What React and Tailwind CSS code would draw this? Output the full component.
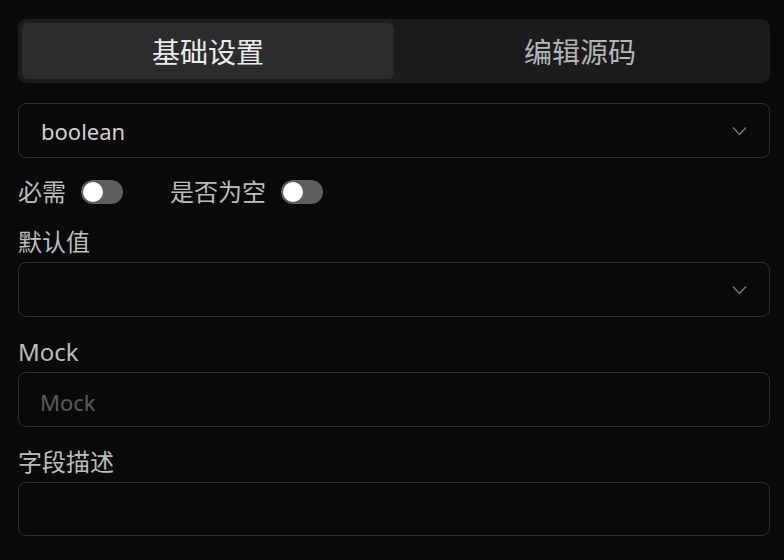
import { useState } from "react";

const font = { fontFamily: '"Noto Sans", "Noto Sans CJK SC", sans-serif' };

const Chevron = () => (
    <svg className="h-[10px] w-[15px] text-[#7a7a7a]" viewBox="0 0 15 10" fill="none">
        <path d="M1 1.5l6.5 7 6.5-7" stroke="currentColor" strokeWidth="1.4" />
    </svg>
);

const Toggle = ({ on, onClick }) => (
    <button
        type="button"
        onClick={onClick}
        className={`flex h-6 w-[42px] items-center rounded-full px-[2px] ${on ? "bg-[#3b82f6] justify-end" : "bg-[#5e5e5e] justify-start"}`}
    >
        <span className="h-5 w-5 rounded-full bg-white" />
    </button>
);

const Label = ({ children }) => (
    <div className="h-8 text-[24px] leading-8 text-[#bdbdbd]">{children}</div>
);

export default function App() {
    const [tab, setTab] = useState(0);
    const [required, setRequired] = useState(false);
    const [nullable, setNullable] = useState(false);

    return (
        <div className="min-h-[560px] w-full bg-[#0a0a0a] pl-[18px] pr-[14px] pt-[19px]" style={font}>
            {/* tabs */}
            <div className="flex h-16 rounded-lg bg-[#1c1c1e] p-1">
                {["基础设置", "编辑源码"].map((t, i) => (
                    <button
                        key={t}
                        onClick={() => setTab(i)}
                        className={`flex-1 rounded-md pt-[2px] text-[28px] ${tab === i ? "bg-[#2c2c2e] text-[#ececec]" : "text-[#b5b5b5]"}`}
                    >
                        {t}
                    </button>
                ))}
            </div>

            {/* type select */}
            <div className="mt-5 flex h-[55px] items-center justify-between rounded-lg border border-[#303030] pl-[22px] pr-[22px]">
                <span className="pt-[2px] text-[22px] text-[#d0d0d0]">boolean</span>
                <Chevron />
            </div>

            <div className="mt-[22px] flex h-6 items-center">
                <span className="mr-[15px] text-[24px] text-[#bdbdbd]">必需</span>
                <Toggle on={required} onClick={() => setRequired(!required)} />
                <span className="ml-[47px] mr-[15px] text-[24px] text-[#bdbdbd]">是否为空</span>
                <Toggle on={nullable} onClick={() => setNullable(!nullable)} />
            </div>

            <div className="mt-[22px]">
                <Label>默认值</Label>
                <div className="mt-1 flex h-[55px] items-center justify-end rounded-lg border border-[#303030] pr-[22px]">
                    <Chevron />
                </div>
            </div>

            <div className="mt-[19px]">
                <Label>Mock</Label>
                <input
                    placeholder="Mock"
                    className="mt-1 block h-[55px] w-full rounded-lg border border-[#303030] bg-transparent px-[21px] pt-[4px] text-[22px] text-[#d0d0d0] outline-none placeholder:text-[#5a5a5a]"
                />
            </div>

            <div className="mt-[19px]">
                <Label>字段描述</Label>
                <input className="mt-1 block h-[54px] w-full rounded-lg border border-[#303030] bg-transparent px-[21px] text-[22px] text-[#d0d0d0] outline-none" />
            </div>
        </div>
    );
}
